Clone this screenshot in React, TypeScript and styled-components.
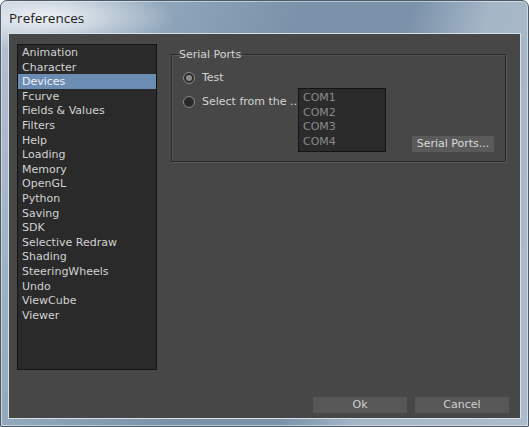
import React from "react";
import styled, { createGlobalStyle } from "styled-components";

const Global = createGlobalStyle`
  html, body { margin: 0; padding: 0; background: #ffffff; }
  body { font-family: "DejaVu Sans", sans-serif; }
`;

const Window = styled.div`
  width: 529px;
  height: 427px;
  box-sizing: border-box;
  border: 1px solid #4f5a66;
  border-radius: 7px 7px 1px 1px;
  display: flex;
  flex-direction: column;
  background:
    radial-gradient(ellipse 130px 34px at 45px 16px, rgba(255,255,255,0.8), rgba(255,255,255,0) 100%),
    linear-gradient(108deg, #b3c3d2 0%, #97acc0 18%, #7b92aa 45%, #7a91a9 62%, #a5b6c7 74%, #acbccb 100%);
  box-shadow: inset 0 0 0 1px rgba(235, 242, 248, 0.55);
  overflow: hidden;
`;

const TitleBar = styled.div`
  height: 32px;
  flex: none;
  display: flex;
  align-items: center;
  padding-left: 8px;
  padding-top: 2px;
  box-sizing: border-box;
  font-family: "Open Sans", "DejaVu Sans", sans-serif;
  font-size: 13.5px;
  color: #1b1b1b;
`;

const Content = styled.div`
  flex: 1;
  margin: 0 7px 7px 7px;
  border: 1px solid #d6e0ea;
  background: #474747;
  display: flex;
  flex-direction: column;
  padding: 10px 11px 5px 8px;
  font-size: 11px;
  color: #d4d4d4;
`;

const MainRow = styled.div`
  display: flex;
  gap: 14px;
  align-items: flex-start;
`;

const CategoryList = styled.ul`
  list-style: none;
  margin: 0;
  padding: 0;
  width: 140px;
  height: 326px;
  box-sizing: border-box;
  border: 1px solid #141414;
  background: #2a2a2a;
  flex: none;
`;

const CategoryItem = styled.li<{ $selected?: boolean }>`
  height: 14.6px;
  line-height: 15.6px;
  padding-left: 4px;
  white-space: nowrap;
  background: ${(p) => (p.$selected ? "#6b8cb3" : "transparent")};
  color: ${(p) => (p.$selected ? "#eef2f6" : "#d2d2d2")};
`;

const RightPanel = styled.div`
  flex: 1;
  margin-top: 4px;
  margin-right: 3px;
`;

const GroupBox = styled.fieldset`
  margin: 0;
  padding: 10px 11px 9px 11px;
  border: 1px solid #2a2a2a;
  box-shadow: 1px 1px 0 #585858, inset 1px 1px 0 #555555;
  min-width: 0;
`;

const GroupLegend = styled.legend`
  margin-left: -5px;
  padding: 0 2px 0 1px;
  line-height: 13px;
  font-size: 11px;
  color: #d4d4d4;
`;

const RadioRow = styled.div`
  display: flex;
  align-items: center;
  height: 14px;
  gap: 7px;
`;

const RadioCircle = styled.span<{ $checked?: boolean }>`
  width: 12px;
  height: 12px;
  box-sizing: border-box;
  border-radius: 50%;
  border: 1px solid #8a8a8a;
  background: radial-gradient(circle at 50% 50%, #262626 0%, #2f2f2f 100%);
  display: flex;
  align-items: center;
  justify-content: center;
  flex: none;
  &::after {
    content: "";
    width: 6px;
    height: 6px;
    border-radius: 50%;
    background: ${(p) => (p.$checked ? "#8c8c8c" : "transparent")};
  }
`;

const RadioLabel = styled.span<{ $width?: number }>`
  white-space: nowrap;
  overflow: hidden;
  line-height: 14px;
  ${(p) => (p.$width ? `width: ${p.$width}px;` : "")}
`;

const SelectRow = styled.div`
  display: flex;
  align-items: flex-start;
  margin-top: 3px;
`;

const SelectRadio = styled(RadioRow)`
  margin-top: 7px;
`;

const PortList = styled.ul`
  list-style: none;
  margin: 0;
  padding: 2px 0 0 0;
  width: 88px;
  height: 64px;
  box-sizing: border-box;
  border: 1px solid #141414;
  background: #2b2b2b;
  flex: none;
`;

const PortItem = styled.li`
  height: 14.5px;
  line-height: 14.5px;
  padding-left: 4px;
  color: #8a8a8a;
`;

const FlatButton = styled.button<{ $width: number }>`
  width: ${(p) => p.$width}px;
  height: 16px;
  padding: 0;
  border: none;
  background: #575757;
  color: #d2d2d2;
  font-family: "DejaVu Sans", sans-serif;
  font-size: 11px;
  line-height: 16px;
  white-space: nowrap;
  overflow: visible;
  text-align: center;
`;

const PortsButton = styled(FlatButton)`
  margin-left: auto;
  align-self: flex-end;
  color: #dadada;
  background: #5a5a5a;
`;

const Footer = styled.div`
  margin-top: auto;
  display: flex;
  justify-content: flex-end;
  gap: 8px;
`;

const categories = [
  "Animation",
  "Character",
  "Devices",
  "Fcurve",
  "Fields & Values",
  "Filters",
  "Help",
  "Loading",
  "Memory",
  "OpenGL",
  "Python",
  "Saving",
  "SDK",
  "Selective Redraw",
  "Shading",
  "SteeringWheels",
  "Undo",
  "ViewCube",
  "Viewer",
];

export default function App() {
  return (
    <>
      <Global />
      <Window>
        <TitleBar>Preferences</TitleBar>
        <Content>
          <MainRow>
            <CategoryList>
              {categories.map((c) => (
                <CategoryItem key={c} $selected={c === "Devices"}>
                  {c}
                </CategoryItem>
              ))}
            </CategoryList>
            <RightPanel>
              <GroupBox>
                <GroupLegend>Serial Ports</GroupLegend>
                <RadioRow>
                  <RadioCircle $checked />
                  <RadioLabel>Test</RadioLabel>
                </RadioRow>
                <SelectRow>
                  <SelectRadio>
                    <RadioCircle />
                    <RadioLabel $width={96}>Select from the ..</RadioLabel>
                  </SelectRadio>
                  <PortList>
                    {["COM1", "COM2", "COM3", "COM4"].map((p) => (
                      <PortItem key={p}>{p}</PortItem>
                    ))}
                  </PortList>
                  <PortsButton $width={82}>Serial Ports...</PortsButton>
                </SelectRow>
              </GroupBox>
            </RightPanel>
          </MainRow>
          <Footer>
            <FlatButton $width={94}>Ok</FlatButton>
            <FlatButton $width={94}>Cancel</FlatButton>
          </Footer>
        </Content>
      </Window>
    </>
  );
}
